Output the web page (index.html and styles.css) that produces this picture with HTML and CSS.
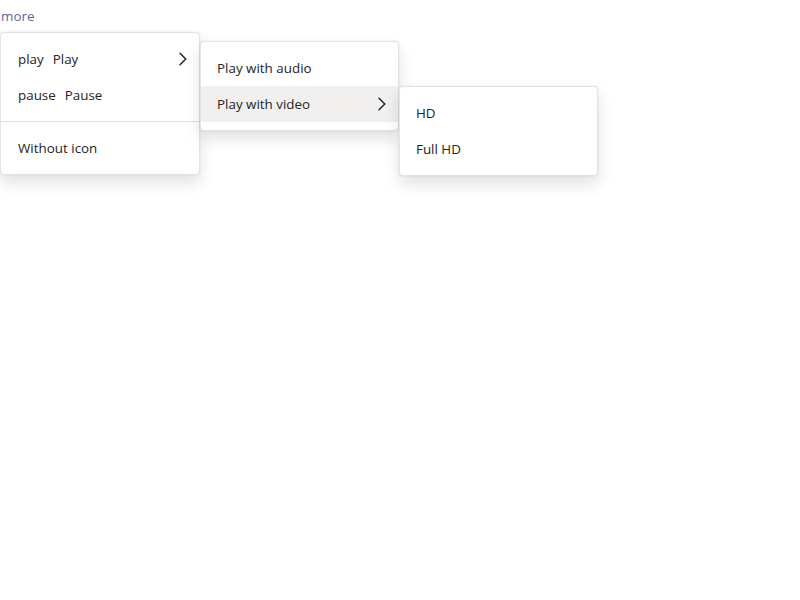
FILE: index.html
```html
<!DOCTYPE html>
<html>
<head>
<meta charset="utf-8">
<link rel="stylesheet" href="styles.css">
</head>
<body>
<div class="page">
  <a class="more" href="#">more</a>
  <div class="menu menu-main">
    <div class="item"><span class="icon">play</span><span class="label">Play</span><svg class="chev" width="12" height="16" viewBox="0 0 12 16"><path d="M3 2.2 L8.8 8 L3 13.8" fill="none" stroke="#242424" stroke-width="1.5" stroke-linecap="round" stroke-linejoin="round"/></svg></div>
    <div class="item"><span class="icon">pause</span><span class="label">Pause</span></div>
    <div class="divider"></div>
    <div class="item"><span class="label">Without icon</span></div>
  </div>
  <div class="menu menu-sub1">
    <div class="item"><span class="label">Play with audio</span></div>
    <div class="item active"><span class="label">Play with video</span><svg class="chev" width="12" height="16" viewBox="0 0 12 16"><path d="M3 2.2 L8.8 8 L3 13.8" fill="none" stroke="#242424" stroke-width="1.5" stroke-linecap="round" stroke-linejoin="round"/></svg></div>
  </div>
  <div class="menu menu-sub2">
    <div class="item"><span class="label">HD</span></div>
    <div class="item"><span class="label">Full HD</span></div>
  </div>
</div>
</body>
</html>
```
FILE: styles.css
```css
html, body {
  margin: 0;
  padding: 0;
  background: #ffffff;
}
body {
  font-family: "Segoe UI", "Open Sans", "Noto Sans", sans-serif;
  font-size: 13.4px;
  color: #242424;
}
.page {
  position: relative;
  width: 800px;
  height: 600px;
}
.more {
  display: inline-block;
  margin: 6px 0 0 1px;
  line-height: 20px;
  color: #6264a7;
  text-decoration: none;
}
.menu {
  position: absolute;
  box-sizing: border-box;
  width: 199px;
  padding: 8px 0;
  background: #ffffff;
  border: 1px solid #e3e3e3;
  border-radius: 4px;
  box-shadow: 0 0 2px rgba(0,0,0,0.10), 0 8px 16px rgba(0,0,0,0.12);
}
.menu-main { left: 0; top: 32px; width: 200px; }
.menu-sub1 { left: 200px; top: 41px; }
.menu-sub2 { left: 399px; top: 86px; }
.item {
  box-sizing: border-box;
  display: flex;
  align-items: center;
  height: 36px;
  padding: 0 10px 1px 16px;
  gap: 9px;
}
.menu-main .item { padding-left: 17px; }
.item.active { background: #f1f0ef; }
.label { flex: 1; white-space: nowrap; }
.icon { white-space: nowrap; }
.chev { flex: none; }
.divider {
  height: 1px;
  background: #e0e0e0;
  margin: 8px 0;
}
```
